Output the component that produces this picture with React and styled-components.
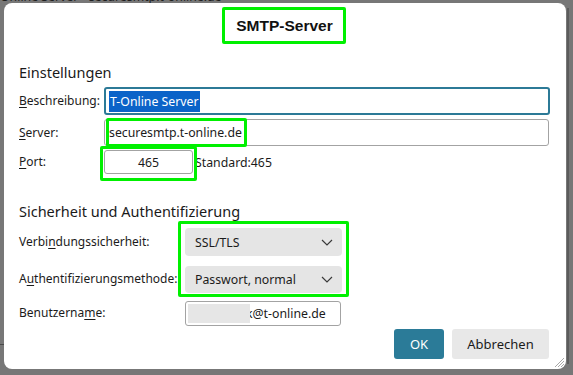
import React from "react";
import styled, { createGlobalStyle } from "styled-components";

const Global = createGlobalStyle`
  html, body { margin: 0; padding: 0; }
  body {
    background: #777777;
    width: 573px;
    height: 375px;
    overflow: hidden;
    font-family: "Noto Sans", "Open Sans", sans-serif;
    color: #1b1b1b;
  }
`;

const Backdrop = styled.div`
  position: relative;
  width: 573px;
  height: 375px;
  box-sizing: border-box;
  padding: 3px 7px 6px 4px;
`;

const BehindTitle = styled.div`
  position: absolute;
  left: 0;
  top: -10px;
  font-size: 12.3px;
  line-height: 14px;
  color: #1f1f1f;
  white-space: nowrap;
`;

const BehindRule = styled.div`
  position: absolute;
  left: 0;
  top: 344px;
  width: 6px;
  height: 1px;
  background: #4a4a4a;
`;

const BehindEdge = styled.div`
  position: absolute;
  left: 567px;
  top: 8px;
  width: 2px;
  height: 356px;
  background: #5c5c5c;
`;

const Dialog = styled.div`
  position: relative;
  height: 366px;
  background: #ffffff;
  border-radius: 8px;
  display: flex;
  flex-direction: column;
  box-sizing: border-box;
  padding: 0 17px 10px 15px;
`;

const TitleBar = styled.div`
  display: flex;
  justify-content: center;
  padding-top: 4px;
  padding-right: 1px;
  height: 41px;
  box-sizing: border-box;
`;

const TitleMark = styled.div`
  width: 124px;
  height: 37px;
  box-sizing: border-box;
  border: 3px solid #00f000;
  border-radius: 2px;
  display: flex;
  align-items: center;
  justify-content: center;
  font-family: "Liberation Sans", Arial, sans-serif;
  font-weight: bold;
  font-size: 15.5px;
  color: #111;
  padding-top: 1px;
  padding-left: 2px;
`;

const Heading = styled.div`
  font-size: 14.5px;
  line-height: 20px;
  color: #1a1a1a;
  margin-top: ${(p) => p.$mt}px;
`;

const Row = styled.div`
  display: grid;
  grid-template-columns: ${(p) => p.$label}px auto 1fr;
  align-items: center;
  margin-top: ${(p) => p.$mt}px;
`;

const Label = styled.label`
  font-size: 12px;
  line-height: 18px;
  color: #1b1b1b;
  white-space: nowrap;
  margin-top: ${(p) => p.$dy || 0}px;
  u { text-decoration: underline; text-underline-offset: 2px; }
`;

const Field = styled.div`
  position: relative;
  box-sizing: border-box;
  width: ${(p) => p.$w}px;
  height: ${(p) => p.$h}px;
  border: ${(p) => (p.$focus ? "2px solid #2c7a97" : "1px solid #a3a3a3")};
  border-radius: 3px;
  display: flex;
  align-items: center;
  justify-content: ${(p) => (p.$center ? "center" : "flex-start")};
  padding: 0 ${(p) => (p.$focus ? 3 : 4)}px;
  font-size: 12.3px;
  color: #1b1b1b;
  background: #fff;
  white-space: nowrap;
  grid-column: ${(p) => p.$span || "auto"};
`;

const Selected = styled.span`
  background: #0b63c8;
  color: #ffffff;
  line-height: 21px;
  padding: 0 1px;
`;

const Mark = styled.div`
  position: absolute;
  top: ${(p) => p.$t}px;
  left: ${(p) => p.$l}px;
  width: ${(p) => p.$w}px;
  height: ${(p) => p.$h}px;
  box-sizing: border-box;
  border: 3px solid #00f000;
  border-radius: 2px;
  pointer-events: none;
`;

const Hint = styled.span`
  font-size: 12.3px;
  color: #1b1b1b;
  margin-left: 2px;
`;

const SelectStack = styled.div`
  position: relative;
  display: flex;
  flex-direction: column;
  gap: 10px;
`;

const Select = styled.div`
  box-sizing: border-box;
  width: 157px;
  height: ${(p) => p.$h}px;
  background: #e5e5e5;
  border-radius: 4px;
  display: flex;
  align-items: center;
  justify-content: space-between;
  padding: 0 9px 0 10px;
  font-size: 12.3px;
  color: #1b1b1b;
`;

const SelRow = styled.div`
  display: flex;
  align-items: flex-start;
  margin-top: 7px;
`;

const LabelCol = styled.div`
  width: 166px;
  display: flex;
  flex-direction: column;
  gap: 19px;
  padding-top: 5px;
`;

const Redact = styled.span`
  position: absolute;
  left: 2px;
  top: 2px;
  width: 62px;
  height: 19px;
  background: #e6e6e6;
`;

const UserText = styled.span`
  padding-left: 56px;
`;

const Buttons = styled.div`
  display: flex;
  justify-content: flex-end;
  gap: 8px;
  margin-top: 3px;
`;

const Button = styled.button`
  box-sizing: border-box;
  height: 30px;
  width: ${(p) => p.$w}px;
  border: none;
  border-radius: 3px;
  font-family: "Noto Sans", "Open Sans", sans-serif;
  font-size: 13px;
  background: ${(p) => (p.$primary ? "#2b7b98" : "#e8e8e8")};
  color: ${(p) => (p.$primary ? "#ffffff" : "#1b1b1b")};
  padding: 0;
`;

const Grip = styled.svg`
  position: absolute;
  right: 1px;
  bottom: 1px;
`;

const Chevron = () => (
  <svg width="12" height="7" viewBox="0 0 12 7">
    <polyline points="1,1 6,6 11,1" fill="none" stroke="#3a3a3a" strokeWidth="1.2" />
  </svg>
);

export default function App() {
  return (
    <>
      <Global />
      <Backdrop>
        <BehindTitle>Online Server - securesmtp.t-online.de</BehindTitle>
        <BehindRule />
        <BehindEdge />
        <Dialog>
          <TitleBar>
            <TitleMark>SMTP-Server</TitleMark>
          </TitleBar>

          <Heading $mt={18}>Einstellungen</Heading>

          <Row $label={85} $mt={5}>
            <Label><u>B</u>eschreibung:</Label>
            <Field $w={446} $h={28} $focus $span="2 / 4">
              <Selected>T-Online Server</Selected>
            </Field>
          </Row>

          <Row $label={85} $mt={4}>
            <Label><u>S</u>erver:</Label>
            <Field $w={445} $h={27} $span="2 / 4">
              securesmtp.t-online.de
              <Mark $t={-2} $l={1} $w={141} $h={29} />
            </Field>
          </Row>

          <Row $label={85} $mt={4}>
            <Label><u>P</u>ort:</Label>
            <Field $w={89} $h={24} $center>
              465
              <Mark $t={-5} $l={-5} $w={97} $h={35} />
            </Field>
            <Hint>Standard:465</Hint>
          </Row>

          <Heading $mt={27}>Sicherheit und Authentifizierung</Heading>

          <SelRow>
            <LabelCol>
              <Label>Verbi<u>n</u>dungssicherheit:</Label>
              <Label>A<u>u</u>thentifizierungsmethode:</Label>
            </LabelCol>
            <SelectStack>
              <Select $h={28}>SSL/TLS<Chevron /></Select>
              <Select $h={27}>Passwort, normal<Chevron /></Select>
              <Mark $t={-7} $l={-7} $w={171} $h={76} />
            </SelectStack>
          </SelRow>

          <Row $label={166} $mt={8}>
            <Label $dy={-1}>Benutzerna<u>m</u>e:</Label>
            <Field $w={156} $h={25}>
              <Redact />
              <UserText>k@t-online.de</UserText>
            </Field>
          </Row>

          <Buttons>
            <Button $primary $w={50}>OK</Button>
            <Button $w={97}>Abbrechen</Button>
          </Buttons>

          <Grip width="11" height="11" viewBox="0 0 11 11">
            <line x1="10" y1="1" x2="1" y2="10" stroke="#a8a8a8" strokeWidth="1" />
            <line x1="10" y1="4" x2="4" y2="10" stroke="#a8a8a8" strokeWidth="1" />
            <line x1="10" y1="7" x2="7" y2="10" stroke="#a8a8a8" strokeWidth="1" />
          </Grip>
        </Dialog>
      </Backdrop>
    </>
  );
}
